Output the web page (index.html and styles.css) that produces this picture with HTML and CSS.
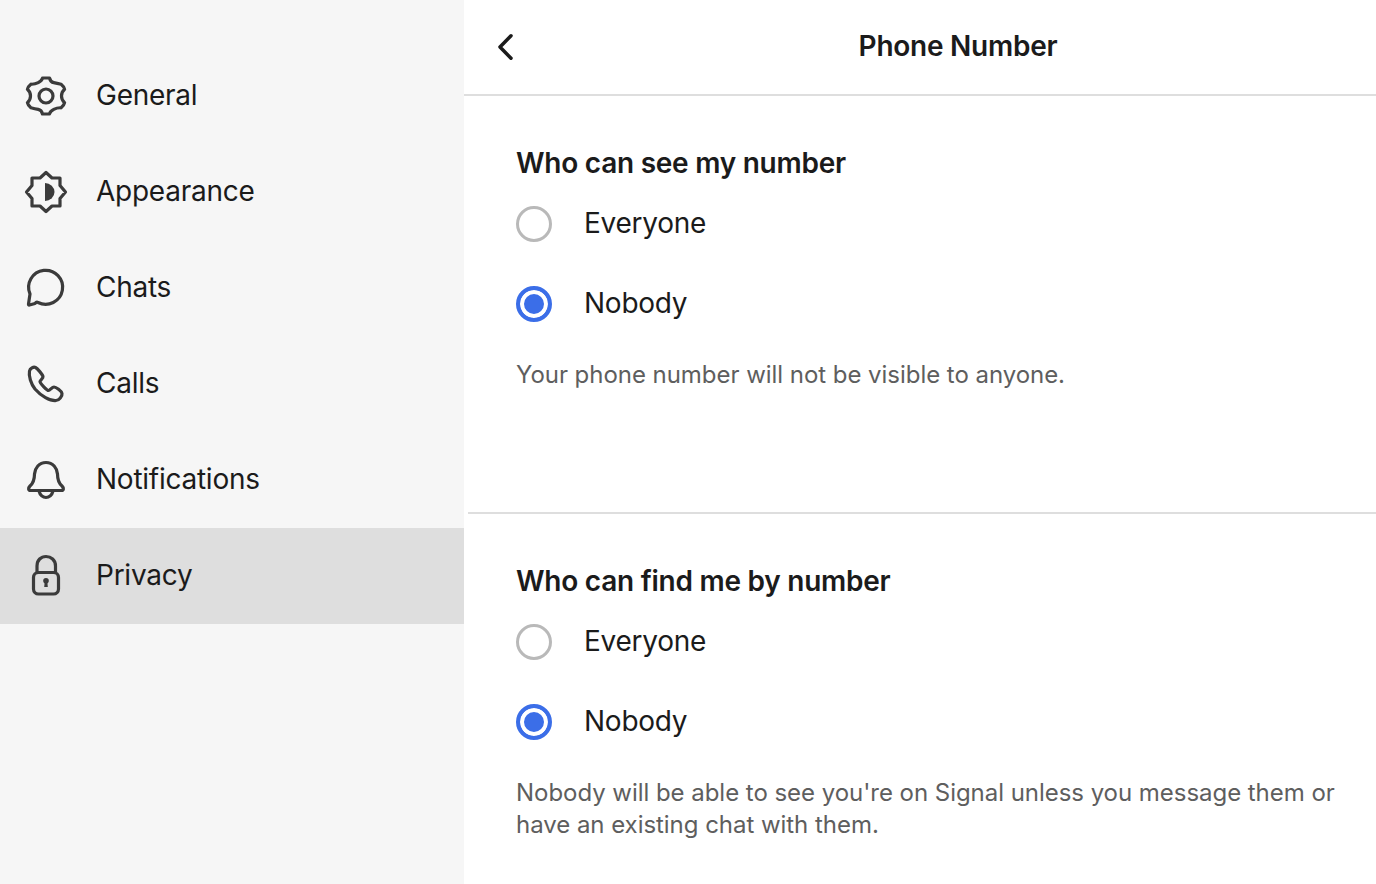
FILE: index.html
```html
<!DOCTYPE html>
<html lang="en">
<head>
    <meta charset="UTF-8">
    <title>Phone Number</title>
    <link rel="stylesheet" href="styles.css">
</head>
<body>
    <nav class="sidebar">
        <div class="nav-item">
            <svg class="nav-icon" viewBox="0 0 48 48"><circle cx="23" cy="24" r="7"/><path d="M19.500 6H26.500Q27.500 10 30.750 10.600T38.100 12.200Q41 14.500 41.600 17.300Q38.500 20 38.500 24T41.600 30.700Q41 33.500 38.100 35.800Q34.500 35.500 30.750 37.400T26.500 42H19.500Q18.500 38 15.250 37.400T7.900 35.800Q5 33.500 4.400 30.700Q7.500 28 7.500 24T4.400 17.300Q5 14.500 7.900 12.200Q11.500 12.500 15.250 10.600T19.500 6Z"/></svg>
            <span class="label">General</span>
        </div>
        <div class="nav-item">
            <svg class="nav-icon" viewBox="0 0 48 48"><path d="M23 4.500 29 10H37V17.500L42.500 24 37 30.500V38H29L23 43.500 17 38H9V30.500L3.500 24 9 17.500V10H17Z"/><path class="fill" d="M22 15A9.500 9 0 0 1 22 33Z"/></svg>
            <span class="label">Appearance</span>
        </div>
        <div class="nav-item">
            <svg class="nav-icon" viewBox="0 0 48 48"><path d="M15 38.500A17 17 0 1 0 7 30L5.500 40Q5.300 41.300 6.500 41L12 39.500Q13.500 37.500 15 38.500Z"/></svg>
            <span class="label">Chats</span>
        </div>
        <div class="nav-item">
            <svg class="nav-icon" viewBox="0 0 48 48"><path d="M6.500 11C7 8.500 10.500 6.500 12.500 7.500 14.500 8.500 19.500 14.500 20 16.500 20.300 18 17.500 20 17 21.500 16.700 23 24 30.500 25.500 30.500 27 30.500 29 27 31 27 33 27 38.500 31 39 33.500 39.500 36 36 40.500 33 40.500 27 41 18 36 12 29 8 24 5.500 16 6.500 11Z"/></svg>
            <span class="label">Calls</span>
        </div>
        <div class="nav-item">
            <svg class="nav-icon" viewBox="0 0 48 48"><path d="M23 6.500C16 6.500 12 12 11.500 18 11.500 24 10.500 27 7 30 5 32 5 34.500 8 34.500H38C41 34.500 41 32 39 30 35.500 27 34.500 24 34.500 18 34 12 30 6.500 23 6.500Z"/><path d="M16 35C17 39 20 41.500 23 41.500S29 39 30 35"/></svg>
            <span class="label">Notifications</span>
        </div>
        <div class="nav-item active">
            <svg class="nav-icon" viewBox="0 0 48 48"><path d="M14 20V14C14 8 18 4.500 23 4.500S32.500 8 32.500 14V20"/><rect x="10.500" y="20.500" width="25" height="21.500" rx="5"/><circle class="fill" cx="23" cy="28.700" r="2.800"/><path class="fill" d="M21.800 29H24.200L24.800 35H21.200Z"/></svg>
            <span class="label">Privacy</span>
        </div>
    </nav>

    <main class="content">
        <header class="top-bar">
            <svg class="back" viewBox="0 0 20 32"><path d="M14 4.750 3 16 14 27.250"/></svg>
            <h1>Phone Number</h1>
        </header>

        <section class="group first">
            <h2>Who can see my number</h2>
            <div class="option"><span class="radio"></span><span class="label">Everyone</span></div>
            <div class="option"><span class="radio checked"></span><span class="label">Nobody</span></div>
            <p class="hint">Your phone number will not be visible to anyone.</p>
        </section>

        <section class="group second">
            <h2>Who can find me by number</h2>
            <div class="option"><span class="radio"></span><span class="label">Everyone</span></div>
            <div class="option"><span class="radio checked"></span><span class="label">Nobody</span></div>
            <p class="hint">Nobody will be able to see you're on Signal unless you message them or have an existing chat with them.</p>
        </section>
    </main>
</body>
</html>
```

FILE: styles.css
```css
body {
    margin: 0;
    height: 884px;
    overflow: hidden;
    display: flex;
    background: #fff;
    color: #1b1b1b;
    font-family: Inter, "Liberation Sans", sans-serif;
    font-size: 28px;
    letter-spacing: -0.25px;
}
.sidebar {
    width: 464px;
    flex-shrink: 0;
    padding-top: 48px;
    box-sizing: border-box;
    background: #f6f6f6;
}
.nav-item {
    height: 96px;
    display: flex;
    align-items: center;
    gap: 25px;
    padding-left: 23px;
}
.nav-item.active {
    background: #dedede;
}
.nav-icon {
    width: 48px;
    height: 48px;
    fill: none;
    stroke: #3b3b3b;
    stroke-width: 3.2;
    stroke-linejoin: round;
    stroke-linecap: round;
}
.nav-icon .fill {
    fill: #3b3b3b;
    stroke: none;
}
.label {
    margin-bottom: 2px;
}
.content {
    flex: 1;
    min-width: 0;
}
.top-bar {
    height: 94px;
    border-bottom: 2px solid #dedede;
    display: flex;
    align-items: center;
    justify-content: center;
    position: relative;
}
.top-bar h1 {
    margin: 0 0 2px 76px;
    font-size: 28px;
    font-weight: 600;
}
.back {
    position: absolute;
    left: 33px;
    top: 31px;
    width: 20px;
    height: 32px;
    fill: none;
    stroke: #1b1b1b;
    stroke-width: 3.5;
    stroke-linecap: round;
    stroke-linejoin: round;
}
.group {
    padding: 50px 30px 0 52px;
}
.group.first {
    height: 366px;
}
.group.second {
    margin-left: 4px;
    padding-left: 48px;
    border-top: 2px solid #dedede;
}
.group h2 {
    margin: 0 0 2px;
    height: 36px;
    line-height: 34px;
    font-size: 28px;
    font-weight: 600;
}
.option {
    height: 80px;
    display: flex;
    align-items: center;
    gap: 32px;
}
.radio {
    width: 36px;
    height: 36px;
    box-sizing: border-box;
    border: 3px solid #b9b9b9;
    border-radius: 50%;
}
.radio.checked {
    border: 4px solid #3b6ee8;
    background: #3b6ee8;
    box-shadow: inset 0 0 0 4px #fff;
}
.hint {
    margin: 15px 0 0;
    font-size: 24px;
    line-height: 32px;
    letter-spacing: -0.04px;
    color: #5e5e5e;
}
```
